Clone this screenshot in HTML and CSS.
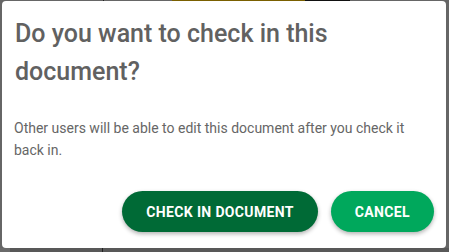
FILE: index.html
```html
<!DOCTYPE html>
<html lang="en">
<head>
<meta charset="UTF-8">
<meta name="viewport" content="width=device-width, initial-scale=1.0">
<title>Check in</title>
<link rel="stylesheet" href="styles.css">
</head>
<body>
<div class="backdrop">
    <div class="dialog">
        <h2 class="dialog-title">Do you want to check in this document?</h2>
        <p class="dialog-text">Other users will be able to edit this document after you check it back in.</p>
        <div class="dialog-actions">
            <button class="btn btn-primary">Check in document</button>
            <button class="btn btn-secondary">Cancel</button>
        </div>
    </div>
</div>
</body>
</html>
```

FILE: styles.css
```css
body {
    margin: 0;
    padding: 0;
    font-family: Roboto, "Liberation Sans", sans-serif;
    background-color: #666;
}
.backdrop {
    height: 252px;
    box-sizing: border-box;
    padding: 1px 3px 0 2px;
    background:
        linear-gradient(to right, transparent 103px, #222 103px, #222 104px, transparent 104px, transparent 172px, #7a6000 172px, #7a6000 305px, #111 305px, #111 350px, transparent 350px) top / 100% 1px no-repeat,
        linear-gradient(to right, #6a6a6a 10px, #585858 10px, #585858 102px, #222 102px, #222 103px, #585858 103px) bottom / 100% 4px no-repeat,
        #666;
}
.dialog {
    background-color: #fff;
    border-radius: 4px;
    height: 247px;
    box-sizing: border-box;
    padding: 14px 12px 16px 13px;
    display: flex;
    flex-direction: column;
}
.dialog-title {
    margin: 0;
    font-size: 25px;
    font-weight: 500;
    line-height: 38px;
    color: #616161;
    padding-right: 90px;
}
.dialog-text {
    margin: 26px 0 0 -1px;
    font-size: 14px;
    line-height: 22px;
    color: #666;
}
.dialog-actions {
    margin-top: auto;
    display: flex;
    justify-content: flex-end;
    gap: 13px;
}
.btn {
    height: 41px;
    padding: 0 24px;
    border: none;
    border-radius: 21px;
    font-family: Roboto, "Liberation Sans", sans-serif;
    font-size: 14px;
    font-weight: 700;
    letter-spacing: 0.35px;
    text-transform: uppercase;
    color: #fff;
    box-shadow: 0 2px 4px rgba(0, 0, 0, 0.3);
    cursor: pointer;
}
.btn-primary {
    background-color: #006a36;
}
.btn-secondary {
    background-color: #00a85c;
}
```
